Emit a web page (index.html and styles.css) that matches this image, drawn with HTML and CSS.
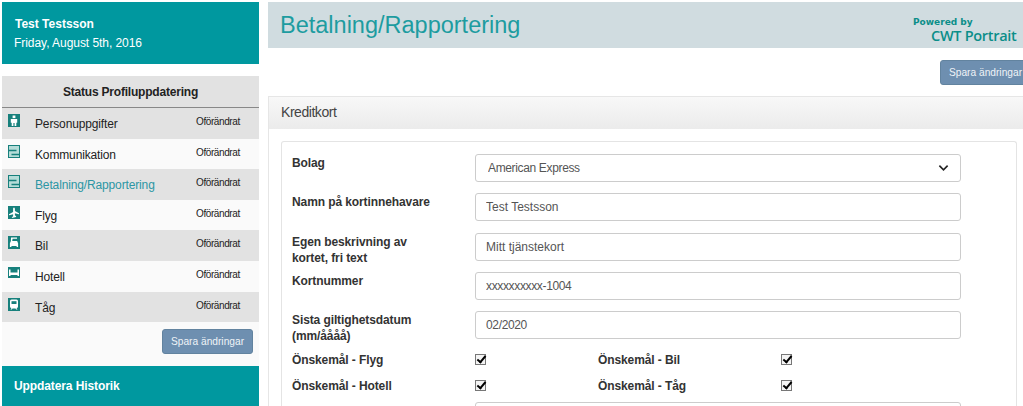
FILE: index.html

```html
<!DOCTYPE html>
<html lang="sv">
<head>
<meta charset="utf-8"/>
<meta content="width=device-width, initial-scale=1.0" name="viewport"/>
<title>Betalning/Rapportering</title>
<link rel="stylesheet" href="styles.css">
</head>
<body>
<div class="page">
  <aside class="sidebar">
    <div class="user-box">
      <div class="user-name">Test Testsson</div>
      <div class="user-date">Friday, August 5th, 2016</div>
    </div>
    <div class="status">
      <div class="status-head">Status Profiluppdatering</div>
      <div class="status-row odd">
        <svg class="nav-icon" viewBox="0 0 12 13"><rect width="12" height="13" fill="#17807c"/><rect x="4.600" y="1.500" width="2.800" height="2.600" fill="#fff"/><path d="M2.800 5h6.400v3.800H8.300V12H6.600V9H5.400v3H3.700V8.800h-.9z" fill="#fff"/></svg>
        <span class="nav-name">Personuppgifter</span><span class="nav-state">Oförändrat</span>
      </div>
      <div class="status-row">
        <svg class="nav-icon" viewBox="0 0 12 13"><rect width="12" height="13" fill="#17807c"/><rect x="1" y="1" width="10" height="11" fill="#b5dcd8"/><path d="M0 4.800h8.500v1.400H0zM3.500 8.800H12v1.400H3.500z" fill="#17807c"/></svg>
        <span class="nav-name">Kommunikation</span><span class="nav-state">Oförändrat</span>
      </div>
      <div class="status-row odd">
        <svg class="nav-icon" viewBox="0 0 12 13"><rect width="12" height="13" fill="#17807c"/><rect x="1" y="1" width="10" height="11" fill="#b5dcd8"/><path d="M0 4.800h8.500v1.400H0zM3.500 8.800H12v1.400H3.500z" fill="#17807c"/></svg>
        <span class="nav-name active">Betalning/Rapportering</span><span class="nav-state">Oförändrat</span>
      </div>
      <div class="status-row">
        <svg class="nav-icon" viewBox="0 0 12 13"><rect width="12" height="13" fill="#17807c"/><path d="M6 1.500c.6 0 .9.800.9 1.800v1.600l4.100 2.400v1l-4.100-1v2l1.200 1v.8L6 11.400l-2.100.7v-.8l1.200-1v-2L1 9.300v-1l4.100-2.400V3.300c0-1 .3-1.800.9-1.800z" fill="#fff"/></svg>
        <span class="nav-name">Flyg</span><span class="nav-state">Oförändrat</span>
      </div>
      <div class="status-row odd">
        <svg class="nav-icon" viewBox="0 0 12 13"><rect width="12" height="13" fill="#17807c"/><path d="M3 1.500h6v1.200H4.600L4.200 5h4.900l1 2.200V11H8.600v-1H3.400v1H1.900V7.200l1-2.200z" fill="#fff"/></svg>
        <span class="nav-name">Bil</span><span class="nav-state">Oförändrat</span>
      </div>
      <div class="status-row">
        <svg class="nav-icon" viewBox="0 0 12 13"><rect width="12" height="11" y="0" fill="#17807c"/><path d="M1 2.500h1.500v3h7v-3H11V9H9.500V8h-7v1H1z" fill="#fff"/></svg>
        <span class="nav-name">Hotell</span><span class="nav-state">Oförändrat</span>
      </div>
      <div class="status-row odd">
        <svg class="nav-icon" viewBox="0 0 12 13"><rect width="12" height="13" fill="#17807c"/><path d="M3.500 1.500h5a1.500 1.500 0 0 1 1.500 1.500v5.500a1.500 1.500 0 0 1-1.500 1.500l1 1.500H8.200l-.7-1h-3l-.7 1H2.500l1-1.500A1.500 1.500 0 0 1 2 8.500V3a1.500 1.500 0 0 1 1.500-1.500z" fill="#fff"/><rect x="3.500" y="3.200" width="5" height="2.800" fill="#17807c"/></svg>
        <span class="nav-name">Tåg</span><span class="nav-state">Oförändrat</span>
      </div>
      <div class="status-foot">
        <button class="btn" type="button">Spara ändringar</button>
      </div>
    </div>
    <div class="history-box">Uppdatera Historik</div>
  </aside>

  <main class="main">
    <div class="title-bar">
      <h1>Betalning/Rapportering</h1>
      <div class="powered">
        <div class="powered-by">Powered by</div>
        <div class="powered-name">CWT Portrait</div>
      </div>
    </div>
    <div class="toolbar">
      <button class="btn" type="button">Spara ändringar</button>
    </div>
    <section class="panel">
      <div class="panel-head">Kreditkort</div>
      <div class="panel-body">
        <form class="card">
          <div class="form-row">
            <label>Bolag</label>
            <div class="select-wrap">
              <select class="field small">
                <option>American Express</option>
              </select>
              <svg class="chevron" viewBox="0 0 12 8"><path d="M1.500 1.500 6 6l4.500-4.500" fill="none" stroke="#222" stroke-width="1.800"/></svg>
            </div>
          </div>
          <div class="form-row">
            <label>Namn på kortinnehavare</label>
            <input class="field" type="text" value="Test Testsson"/>
          </div>
          <div class="form-row">
            <label>Egen beskrivning av<br>kortet, fri text</label>
            <input class="field" type="text" value="Mitt tjänstekort"/>
          </div>
          <div class="form-row">
            <label>Kortnummer</label>
            <input class="field small" type="text" value="xxxxxxxxxx-1004"/>
          </div>
          <div class="form-row">
            <label>Sista giltighetsdatum<br>(mm/åååå)</label>
            <input class="field small" type="text" value="02/2020"/>
          </div>
          <div class="check-row">
            <label>Önskemål - Flyg</label>
            <input class="check" type="checkbox" checked/>
            <label>Önskemål - Bil</label>
            <input class="check" type="checkbox" checked/>
          </div>
          <div class="check-row">
            <label>Önskemål - Hotell</label>
            <input class="check" type="checkbox" checked/>
            <label>Önskemål - Tåg</label>
            <input class="check" type="checkbox" checked/>
          </div>
          <div class="form-row">
            <label></label>
            <input class="field" type="text"/>
          </div>
        </form>
      </div>
    </section>
  </main>
</div>
</body>
</html>
```

FILE: styles.css

```css
html, body {
    height: 406px;
    overflow: hidden;
}
body {
    font-family: "Liberation Sans", Arial, sans-serif;
    background: #ffffff;
    margin: 0;
    color: #222;
}
.page {
    display: flex;
    align-items: flex-start;
    gap: 9px;
    width: 1040px;
    height: 404px;
    overflow: hidden;
    padding: 2px 0 0 2px;
}
.sidebar {
    width: 257px;
    flex: none;
}
.user-box {
    background: #00989f;
    color: #fff;
    height: 62px;
    padding: 14px 12px 0 13px;
    box-sizing: border-box;
    margin-bottom: 12px;
}
.user-name {
    font-size: 12px;
    font-weight: bold;
    line-height: 16px;
}
.user-date {
    font-size: 12px;
    letter-spacing: -0.05px;
    line-height: 16px;
    margin-top: 3px;
    margin-left: -1px;
}
.status {
    background: #fafafa;
}
.status-head {
    background: #e2e2e2;
    height: 32px;
    line-height: 33px;
    border-bottom: 1px solid #888;
    box-sizing: border-box;
    text-align: center;
    font-size: 12px;
    font-weight: bold;
    letter-spacing: -0.2px;
}
.status-row {
    display: flex;
    height: 30.600px;
    padding-left: 6px;
    box-sizing: border-box;
}
.status-row.odd {
    background: #e2e2e2;
}
.nav-icon {
    width: 12px;
    height: 13px;
    flex: none;
    margin-top: 6px;
}
.nav-name {
    font-size: 12px;
    letter-spacing: -0.14px;
    line-height: 15px;
    margin: 9px 0 0 15px;
    width: 161px;
    flex: none;
}
.nav-name.active {
    color: #2c96a4;
}
.nav-state {
    font-size: 10px;
    letter-spacing: -0.4px;
    line-height: 12px;
    margin-top: 8px;
}
.status-foot {
    display: flex;
    justify-content: flex-end;
    padding: 7px 6px 12px 0;
}
.btn {
    background: #6e8fb0;
    color: #eef3f7;
    font-family: "Liberation Sans", Arial, sans-serif;
    font-size: 10.200px;
    width: 91px;
    height: 25px;
    padding: 0;
    border: 1px solid #62839f;
    border-radius: 3px;
    cursor: pointer;
}
.history-box {
    background: #00989f;
    color: #fff;
    height: 60px;
    padding: 13px 12px 0 12px;
    box-sizing: border-box;
    font-size: 12px;
    letter-spacing: -0.1px;
    font-weight: bold;
    line-height: 14px;
}
.main {
    width: 763px;
    flex: none;
}
.title-bar {
    display: flex;
    justify-content: space-between;
    background: #d0dce0;
    height: 46px;
    padding: 0 0 0 12px;
}
h1 {
    margin: 0;
    font-size: 23.500px;
    font-weight: normal;
    line-height: 46px;
    color: #1d9ca0;
}
.powered {
    width: 118px;
    padding-top: 15px;
    color: #0b8e89;
}
.powered-by {
    font-family: "DejaVu Sans", sans-serif;
    font-size: 9px;
    font-weight: bold;
    line-height: 10px;
}
.powered-name {
    font-family: "Open Sans", sans-serif;
    font-size: 14.500px;
    font-weight: 600;
    line-height: 18px;
    padding-left: 18px;
    letter-spacing: -0.3px;
}
.toolbar {
    display: flex;
    justify-content: flex-end;
    padding: 12px 0 11px 0;
}
.panel {
    border: 1px solid #e6e6e6;
    border-bottom: 0;
}
.panel-head {
    background: linear-gradient(#f8f8f8, #ebebeb);
    height: 32px;
    line-height: 31px;
    padding-left: 12px;
    font-size: 14px;
    letter-spacing: -0.45px;
    color: #444;
}
.panel-body {
    padding: 12px 13px 0 12px;
}
.card {
    border: 1px solid #e4e4e4;
    border-bottom: 0;
    border-radius: 3px;
    width: 736px;
    box-sizing: border-box;
    padding: 12px 56px 0 10px;
}
.form-row {
    display: grid;
    grid-template-columns: 183px 486px;
    grid-template-rows: 28px;
    margin-bottom: 11.300px;
}
.form-row label, .check-row label {
    font-size: 12px;
    letter-spacing: -0.1px;
    font-weight: bold;
    line-height: 16px;
    padding-top: 1px;
    color: #333;
}
.check-row label {
    padding-top: 2px;
}
.field {
    display: block;
    width: 100%;
    height: 28px;
    box-sizing: border-box;
    padding: 0 12px 0 10px;
    background: #fff;
    border: 1px solid #ccc;
    border-radius: 3px;
    font-family: "Liberation Sans", Arial, sans-serif;
    font-size: 12px;
    color: #555;
}
.field.small {
    letter-spacing: -0.35px;
}
select.field {
    appearance: none;
    padding-left: 12px;
}
.select-wrap {
    position: relative;
}
.chevron {
    position: absolute;
    right: 12px;
    top: 10px;
    width: 11px;
    height: 8px;
}
.check-row {
    display: grid;
    grid-template-columns: 183px 123px 183px 11px;
    height: 26px;
}
.check {
    appearance: none;
    position: relative;
    width: 11px;
    height: 11px;
    margin: 4px 0 0 0;
    background: #f4f4f4;
    border: 1px solid #777;
    box-sizing: border-box;
}
.check::after {
    content: "";
    position: absolute;
    left: 3px;
    top: -1px;
    width: 3px;
    height: 7px;
    border: solid #000;
    border-width: 0 2px 2px 0;
    transform: rotate(40deg);
}
```
